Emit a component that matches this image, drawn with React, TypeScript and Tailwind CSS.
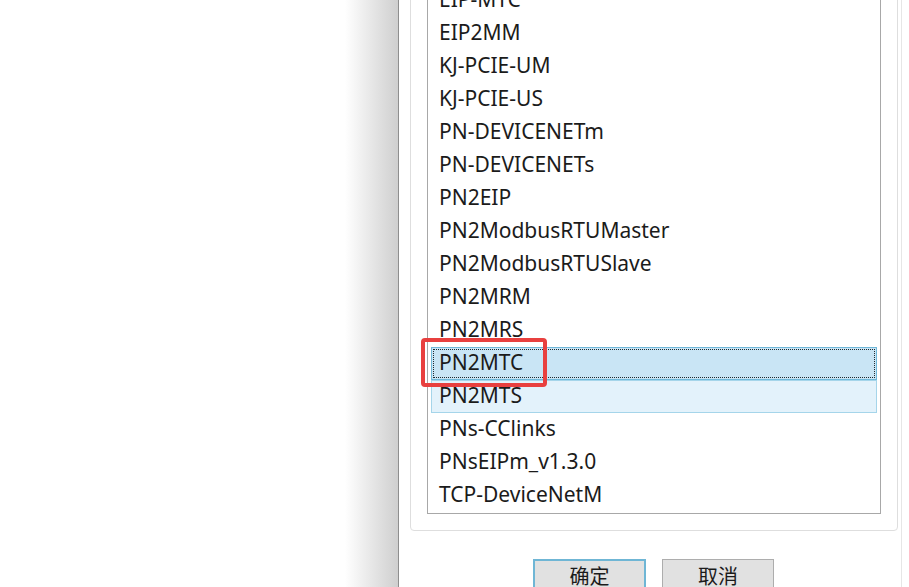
import React from "react";

const items = [
  "EIP-MTC",
  "EIP2MM",
  "KJ-PCIE-UM",
  "KJ-PCIE-US",
  "PN-DEVICENETm",
  "PN-DEVICENETs",
  "PN2EIP",
  "PN2ModbusRTUMaster",
  "PN2ModbusRTUSlave",
  "PN2MRM",
  "PN2MRS",
  "PN2MTC",
  "PN2MTS",
  "PNs-CClinks",
  "PNsEIPm_v1.3.0",
  "TCP-DeviceNetM",
];

function Row({ label }: { label: string }) {
  if (label === "PN2MTC") {
    return (
      <div className="relative h-[33px] mx-[3px] bg-[#c9e5f5] border border-[#6fb7d8] flex items-center pl-[7px] pb-[3px]">
        <div className="absolute inset-[1px] border border-dotted border-[#1e2a30]" />
        <span className="relative">{label}</span>
        <div className="absolute left-[-11px] top-[-10px] w-[126px] h-[49px] border-[4px] border-[#e8403f] rounded-[4px]" />
      </div>
    );
  }
  if (label === "PN2MTS") {
    return (
      <div className="h-[33px] mx-[3px] bg-[#e3f2fb] border border-[#a5d5ea] flex items-center pl-[7px] pb-[3px]">
        <span>{label}</span>
      </div>
    );
  }
  return (
    <div className="h-[33px] mx-[3px] flex items-center pl-[8px] pb-[3px]">
      <span>{label}</span>
    </div>
  );
}

export default function App() {
  return (
    <div
      className="w-[909px] h-[587px] overflow-hidden flex bg-white text-[#1b1b1b]"
      style={{ fontFamily: '"Noto Sans", "Noto Sans CJK SC", sans-serif' }}
    >
      <div className="w-[345px] shrink-0 bg-white" />
      <div className="w-[53px] shrink-0 bg-gradient-to-r from-white to-[#cfcfcf]" />
      <div className="w-px shrink-0 bg-[#8e8e8e]" />
      <div className="w-[502px] shrink-0 flex flex-col bg-white">
        <div className="mt-[-50px] ml-[11px] w-[488px] h-[581px] shrink-0 border border-[#dedede] rounded-[4px] pl-[16px] pr-[16px] pb-[16px] flex flex-col">
          <div className="flex-1 border border-[#a8a8a8] border-t-0 bg-white flex flex-col justify-end pb-[1px] text-[21px] leading-none">
            {items.map((it) => (
              <Row key={it} label={it} />
            ))}
          </div>
        </div>
        <div className="flex gap-[16px] mt-[28px] ml-[134px]">
          <div className="w-[113px] h-[34px] bg-[#e1e1e1] border-2 border-[#6fb6d5] flex items-center justify-center text-[20px] leading-none pt-[1px]">
            确定
          </div>
          <div className="w-[112px] h-[34px] bg-[#e1e1e1] border border-[#adadad] flex items-center justify-center text-[20px] leading-none pt-[1px]">
            取消
          </div>
        </div>
      </div>
      <div className="w-px shrink-0 bg-[#e6e6e6]" />
      <div className="flex-1 bg-white" />
    </div>
  );
}
